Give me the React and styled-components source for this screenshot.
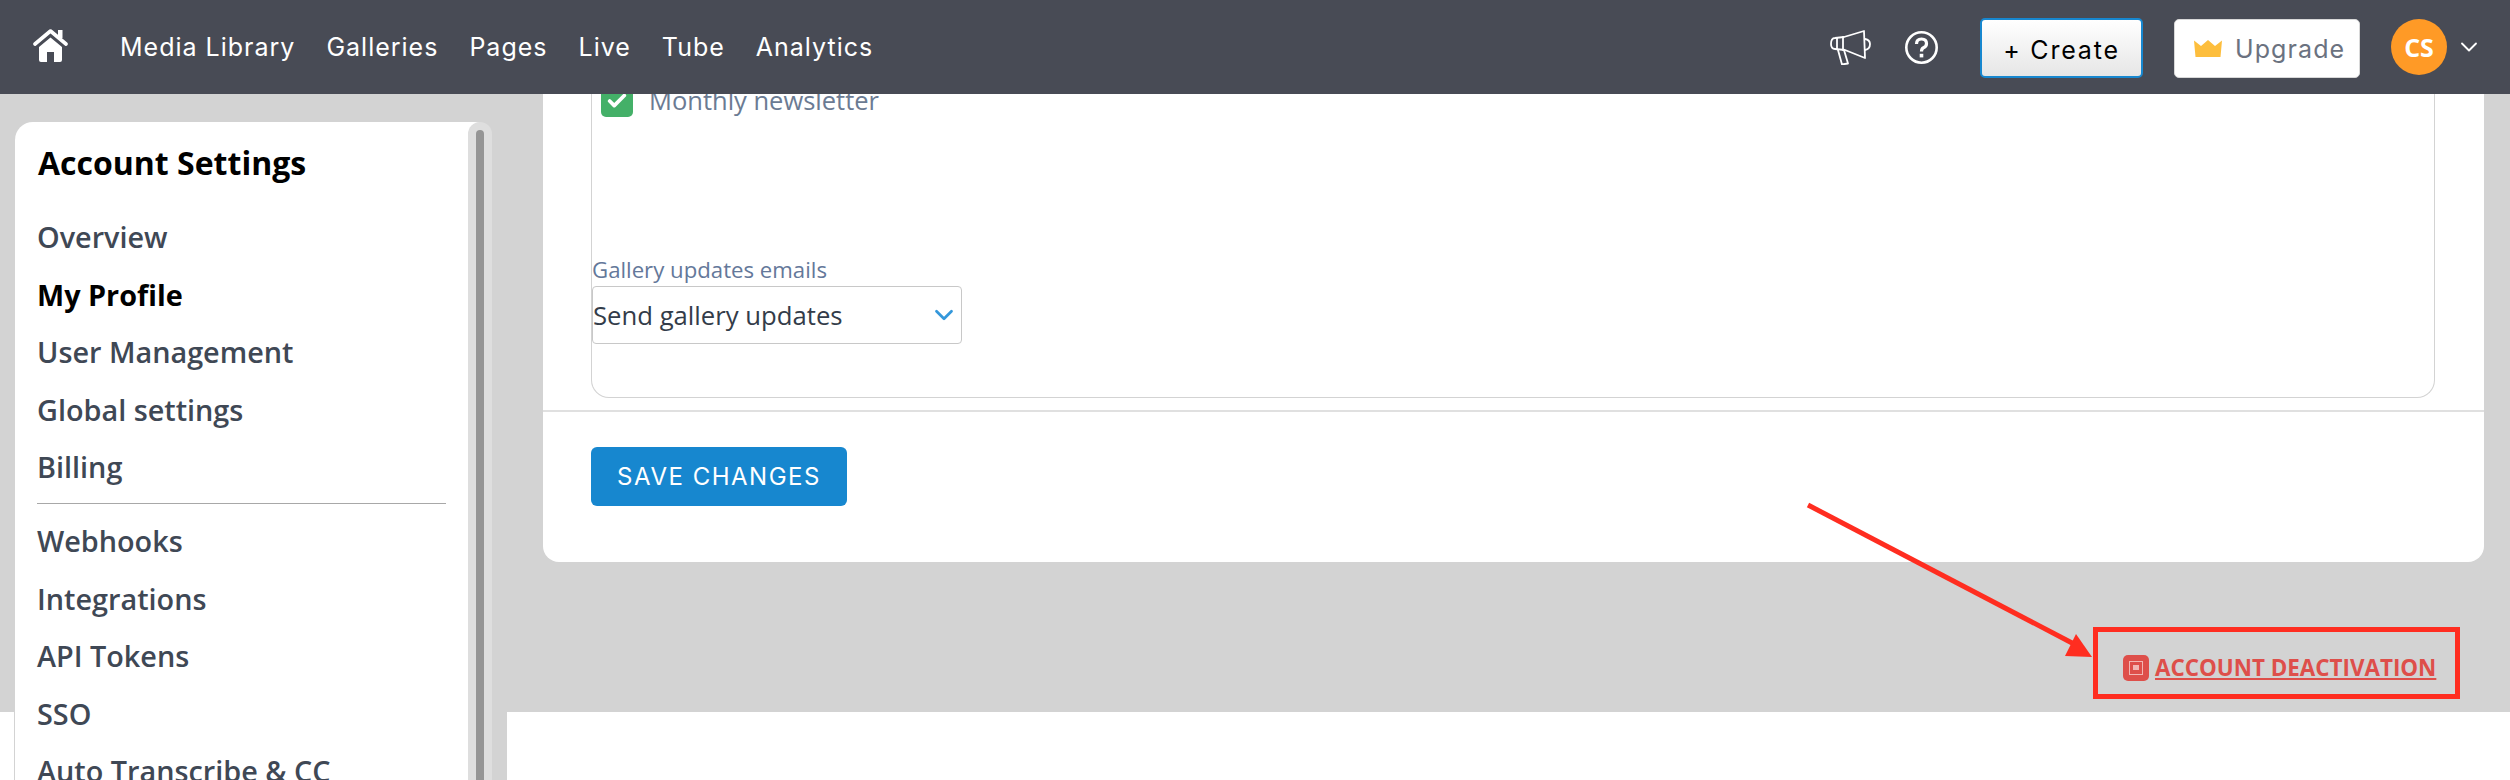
import styled, { createGlobalStyle } from "styled-components"
import { ChevronDown, Check } from "lucide-react"

const Global = createGlobalStyle`
  html, body { margin: 0; padding: 0; background: #fff; }
  * { box-sizing: border-box; }
`

const Page = styled.div`
  position: relative;
  width: 2510px;
  height: 780px;
  overflow: hidden;
  font-family: "Open Sans", "Liberation Sans", sans-serif;
  background: #fff;
`

const TopBar = styled.header`
  position: relative;
  z-index: 2;
  height: 94px;
  display: flex;
  align-items: center;
  padding: 0 27px 0 33px;
  background: #484b55;
  color: #fff;
`

const HomeLink = styled.a`
  display: flex;
  margin: 0 52px 4px 0;
  color: #fff;
`

const Nav = styled.nav`
  display: flex;
  gap: 31px;
  flex: 1;
`

const NavLink = styled.a`
  font-family: Inter, "Open Sans", sans-serif;
  font-size: 25px;
  font-weight: 400;
  letter-spacing: 1px;
  color: #fff;
`

const Tools = styled.div`
  display: flex;
  align-items: center;
`

const ToolIcon = styled.span`
  display: flex;
  margin-right: ${(p) => p.$gap}px;
  color: #fff;
`

const Create = styled.button`
  width: 163px;
  height: 60px;
  margin: 2px 31px 0 0;
  padding: 3px 0 0;
  border: 2px solid #1787cf;
  border-radius: 5px;
  background: linear-gradient(#fff, #e6e6e6);
  font-family: Inter, sans-serif;
  font-size: 25px;
  letter-spacing: 1.8px;
  color: #000;
`

const Upgrade = styled.button`
  display: flex;
  align-items: center;
  gap: 13px;
  width: 186px;
  height: 59px;
  margin: 3px 31px 0 0;
  padding: 0 0 0 19px;
  border: 1px solid #d8d8d8;
  border-radius: 5px;
  background: #fff;
  font-family: Inter, sans-serif;
  font-size: 25px;
  letter-spacing: 1.1px;
  color: #6b7280;
`

const Avatar = styled.span`
  display: flex;
  align-items: center;
  justify-content: center;
  width: 56px;
  height: 56px;
  margin-right: 8px;
  border-radius: 50%;
  background: #ff9a26;
  font-size: 25px;
  font-weight: 700;
  color: #fff;
`

const Body = styled.div`
  display: grid;
  grid-template-columns: 15px 492px 1fr;
  height: 686px;
`

const Gutter = styled.div`
  background: linear-gradient(#d3d3d3 618px, #fff 618px);
  border-right: 1px solid #d3d3d3;
`

const SideColumn = styled.aside`
  padding: 28px 15px 0 0;
  background: #d3d3d3;
  overflow: hidden;
`

const SideCard = styled.div`
  display: flex;
  height: 700px;
  border-radius: 18px 18px 0 0;
  background: #fff;
`

const SideContent = styled.div`
  flex: 1;
  padding: 19px 22px 0;
`

const SideTitle = styled.h2`
  margin: 0 0 23px 1px;
  font-size: 32px;
  line-height: 44px;
  font-weight: 700;
  color: #000;
`

const SideItem = styled.a`
  display: block;
  height: 57.6px;
  font-size: 28.8px;
  line-height: 57.6px;
  font-weight: ${(p) => (p.$active ? 700 : 600)};
  color: ${(p) => (p.$active ? "#000" : "#3f4855")};
`

const SideRule = styled.hr`
  height: 1px;
  margin: 7px 0 8px;
  border: 0;
  background: #a8a8a8;
`

const ScrollTrack = styled.div`
  width: 24px;
  padding: 8px 8px 0;
  border-radius: 12px 12px 0 0;
  background: #dedede;
`

const ScrollThumb = styled.div`
  height: 100%;
  border-radius: 5px 5px 0 0;
  background: #959595;
`

const Main = styled.main`
  display: flex;
  flex-direction: column;
  padding: 0 26px 0 36px;
  height: 618px;
  background: #d3d3d3;
  overflow: hidden;
`

const Card = styled.section`
  flex: none;
  border-radius: 0 0 16px 16px;
  background: #fff;
`

const InnerBox = styled.div`
  display: flow-root;
  height: 304px;
  margin: 0 49px 0 48px;
  border: 1px solid #d3d3d3;
  border-top: 0;
  border-radius: 0 0 18px 18px;
`

const CheckRow = styled.label`
  display: flex;
  align-items: center;
  gap: 16px;
  height: 32px;
  margin: -9px 0 0 9px;
  font-size: 25.5px;
  color: #6b7b93;
`

const CheckText = styled.span`
  margin-top: -3px;
`

const CheckBox = styled.span`
  display: flex;
  align-items: center;
  justify-content: center;
  width: 32px;
  height: 32px;
  border-radius: 5px;
  background: #44b068;
  color: #fff;
`

const FieldLabel = styled.div`
  margin-top: 137px;
  font-size: 22.2px;
  line-height: 32px;
  color: #64789a;
`

const Select = styled.div`
  display: flex;
  align-items: center;
  justify-content: space-between;
  width: 370px;
  height: 58px;
  padding: 0 2px 0 0;
  border: 1px solid #c8c8c8;
  border-radius: 4px;
  font-size: 25.7px;
  color: #333c49;
`

const Footer = styled.div`
  margin-top: 12px;
  padding: 35px 48px 56px;
  border-top: 2px solid #e0e0e0;
`

const SaveButton = styled.button`
  width: 256px;
  height: 59px;
  border: 0;
  border-radius: 6px;
  background: #1787cf;
  font-family: Inter, sans-serif;
  font-size: 24px;
  letter-spacing: 1.5px;
  color: #fff;
`

const DeactivateBox = styled.div`
  align-self: flex-end;
  display: flex;
  align-items: flex-end;
  gap: 6px;
  width: 367px;
  height: 72px;
  margin: 65px 24px 0 0;
  padding: 0 0 13px 25px;
  border: 5px solid #ff2d20;
`

const DeactivateIcon = styled.span`
  display: flex;
  align-items: center;
  justify-content: center;
  width: 26px;
  height: 26px;
  border-radius: 5px;
  background: #de4f4a;
`

const DeactivateIconInner = styled.span`
  width: 14px;
  height: 14px;
  padding: 3px;
  border: 1.5px solid #f2b6b3;
  &::after {
    content: "";
    display: block;
    height: 5px;
    background: #f2b6b3;
  }
`

const DeactivateLink = styled.a`
  font-size: 22.4px;
  line-height: 26px;
  font-weight: 700;
  color: #de4f4a;
  text-decoration: underline;
`

const Annotation = styled.svg`
  position: absolute;
  left: 0;
  top: 0;
  z-index: 3;
  pointer-events: none;
`

const sideTop = ["Overview", "My Profile", "User Management", "Global settings", "Billing"]
const sideBottom = ["Webhooks", "Integrations", "API Tokens", "SSO", "Auto Transcribe & CC"]
const navItems = ["Media Library", "Galleries", "Pages", "Live", "Tube", "Analytics"]

function HomeIcon() {
  return (
    <svg width="35" height="33" viewBox="0 0 35 33" fill="currentColor">
      <rect x="25" y="1" width="4.500" height="8" />
      <path d="M2 15 L17.500 2 L33 15" fill="none" stroke="currentColor" strokeWidth="3.600" strokeLinecap="round" strokeLinejoin="round" />
      <path d="M6 18 L17.500 8.500 L29 18 L29 31 Q29 33 27 33 L21 33 L21 23 L14 23 L14 33 L8 33 Q6 33 6 31 Z" />
    </svg>
  )
}

function Megaphone() {
  return (
    <svg width="41" height="35" viewBox="0 0 41 35" fill="none" stroke="currentColor" strokeWidth="1.800" strokeLinejoin="round" strokeLinecap="round">
      <path d="M5 8 L14 7 L34 1 L35 28 L15 20 L5 19 Q1 19 1 14 Q1 8 5 8 Z" />
      <path d="M7 8 L7 19 M13 7 L13 20" />
      <path d="M35 9 Q40 10 40 14 Q40 19 35 20" />
      <path d="M8 20 L12 34.500 L18 33.500 L14 20" />
    </svg>
  )
}

function HelpIcon() {
  return (
    <svg width="33" height="33" viewBox="0 0 33 33" fill="none" stroke="currentColor">
      <circle cx="16.500" cy="16.500" r="15.200" strokeWidth="2.600" />
      <path d="M11.500 13 Q11.500 8 16.500 8 Q21.500 8 21.500 12.500 Q21.500 15.500 18.500 16.800 Q16.500 17.800 16.500 20.500" strokeWidth="3.200" />
      <rect x="14.700" y="22.800" width="3.600" height="3.600" fill="currentColor" stroke="none" />
    </svg>
  )
}

function Crown() {
  return (
    <svg width="28" height="17" viewBox="0 0 28 17" fill="#fdbe3d">
      <path d="M0 0.500 L7 6 L14 0 L21 6 L28 0.500 L26.500 17 L1.500 17 Z" />
    </svg>
  )
}

export default function App() {
  return (
    <Page>
      <Global />
      <TopBar>
        <HomeLink>
          <HomeIcon />
        </HomeLink>
        <Nav>
          {navItems.map((n) => (
            <NavLink key={n}>{n}</NavLink>
          ))}
        </Nav>
        <Tools>
          <ToolIcon $gap={34}>
            <Megaphone />
          </ToolIcon>
          <ToolIcon $gap={42}>
            <HelpIcon />
          </ToolIcon>
          <Create>+ Create</Create>
          <Upgrade>
            <Crown />
            Upgrade
          </Upgrade>
          <Avatar>CS</Avatar>
          <ChevronDown size={28} strokeWidth={1.6} />
        </Tools>
      </TopBar>
      <Body>
        <Gutter />
        <SideColumn>
          <SideCard>
            <SideContent>
              <SideTitle>Account Settings</SideTitle>
              {sideTop.map((s) => (
                <SideItem key={s} $active={s === "My Profile"}>
                  {s}
                </SideItem>
              ))}
              <SideRule />
              {sideBottom.map((s) => (
                <SideItem key={s}>{s}</SideItem>
              ))}
            </SideContent>
            <ScrollTrack>
              <ScrollThumb />
            </ScrollTrack>
          </SideCard>
        </SideColumn>
        <Main>
          <Card>
            <InnerBox>
              <CheckRow>
                <CheckBox>
                  <Check size={22} strokeWidth={4} />
                </CheckBox>
                <CheckText>Monthly newsletter</CheckText>
              </CheckRow>
              <FieldLabel>Gallery updates emails</FieldLabel>
              <Select>
                Send gallery updates
                <ChevronDown size={30} color="#3498db" strokeWidth={2.2} />
              </Select>
            </InnerBox>
            <Footer>
              <SaveButton>SAVE CHANGES</SaveButton>
            </Footer>
          </Card>
          <DeactivateBox>
            <DeactivateIcon>
              <DeactivateIconInner />
            </DeactivateIcon>
            <DeactivateLink>ACCOUNT DEACTIVATION</DeactivateLink>
          </DeactivateBox>
        </Main>
      </Body>
      <Annotation width="2510" height="780">
        <line x1="1808" y1="505" x2="2074" y2="644" stroke="#ff2d20" strokeWidth="5" />
        <polygon points="2092,657 2065,656 2076,634" fill="#ff2d20" />
      </Annotation>
    </Page>
  )
}
